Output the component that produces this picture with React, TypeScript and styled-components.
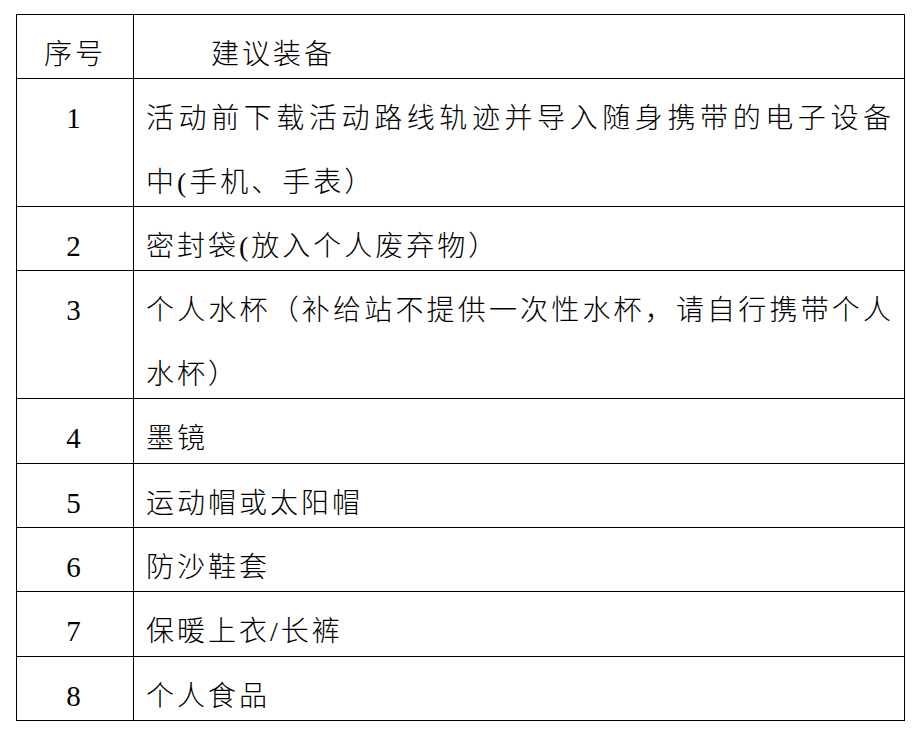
import React from 'react'
import styled, { createGlobalStyle } from 'styled-components'

type Row = {
  no: string
  lines: string[]
}

const rows: Row[] = [
  { no: '1', lines: ['活动前下载活动路线轨迹并导入随身携带的电子设备', '中(手机、手表）'] },
  { no: '2', lines: ['密封袋(放入个人废弃物）'] },
  { no: '3', lines: ['个人水杯（补给站不提供一次性水杯，请自行携带个人', '水杯）'] },
  { no: '4', lines: ['墨镜'] },
  { no: '5', lines: ['运动帽或太阳帽'] },
  { no: '6', lines: ['防沙鞋套'] },
  { no: '7', lines: ['保暖上衣/长裤'] },
  { no: '8', lines: ['个人食品'] },
]

const GlobalStyle = createGlobalStyle`
  html, body {
    margin: 0;
    background: #fff;
  }
  body {
    font-family: "Liberation Serif", "Noto Sans CJK SC", serif;
    color: #000;
  }
`

const Page = styled.div`
  padding: 14px 16px;
`

const Table = styled.table`
  width: 100%;
  border-collapse: collapse;
  table-layout: fixed;
  font-size: 28px;
  font-weight: 300;
  letter-spacing: 3px;
`

const NoCol = styled.col`
  width: 117px;
`

const Cell = styled.td<{ $center?: boolean }>`
  border: 1px solid #000;
  padding: ${(p) => (p.$center ? '0' : '0 10px 0 12px')};
  vertical-align: top;
  text-align: ${(p) => (p.$center ? 'center' : 'left')};
`

// each visual line is its own box, the glyphs sit low in the line like the Word grid does
const Line = styled.div<{ $justify?: boolean; $indent?: boolean }>`
  padding-top: 16px;
  line-height: 47.36px;
  text-align-last: ${(p) => (p.$justify ? 'justify' : 'auto')};
  text-indent: ${(p) => (p.$indent ? '65px' : '0')};
`

const Num = styled.span`
  font-size: 29px;
  font-weight: 400;
`

export default function App() {
  return (
    <Page>
      <GlobalStyle />
      <Table>
        <colgroup>
          <NoCol />
          <col />
        </colgroup>
        <tbody>
          <tr>
            <Cell $center>
              <Line>序号</Line>
            </Cell>
            <Cell>
              <Line $indent>建议装备</Line>
            </Cell>
          </tr>
          {rows.map((row) => (
            <tr key={row.no}>
              <Cell $center>
                <Line>
                  <Num>{row.no}</Num>
                </Line>
              </Cell>
              <Cell>
                {row.lines.map((text, i) => (
                  <Line key={i} $justify={i < row.lines.length - 1}>
                    {text}
                  </Line>
                ))}
              </Cell>
            </tr>
          ))}
        </tbody>
      </Table>
    </Page>
  )
}
